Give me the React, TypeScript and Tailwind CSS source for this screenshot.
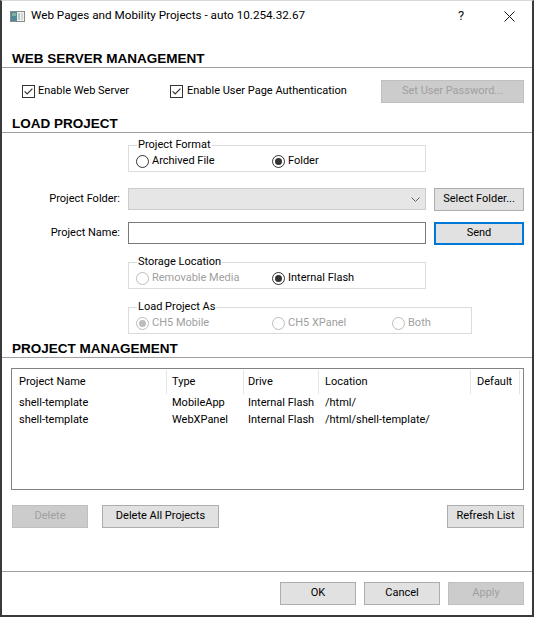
import React from "react";

type RadioProps = { checked?: boolean; disabled?: boolean };

function CheckBox() {
  return (
    <svg width="13" height="13" viewBox="0 0 13 13" className="shrink-0">
      <rect x="0.5" y="0.5" width="12" height="12" fill="#ffffff" stroke="#333333" />
      <polyline points="2.6,6.4 5.2,9 10.4,3.6" fill="none" stroke="#333333" strokeWidth="1.2" />
    </svg>
  );
}

function Radio({ checked, disabled }: RadioProps) {
  const c = disabled ? "#bcbcbc" : "#333333";
  return (
    <svg width="13" height="13" viewBox="0 0 13 13" className="shrink-0">
      <circle cx="6.5" cy="6.5" r="6" fill="#ffffff" stroke={c} />
      {checked && <circle cx="6.5" cy="6.5" r="3.5" fill={c} />}
    </svg>
  );
}

function RadioItem({ label, checked, disabled, w }: RadioProps & { label: string; w: string }) {
  return (
    <div className={`flex items-center ${w}`}>
      <Radio checked={checked} disabled={disabled} />
      <span className={`ml-[3px] ${disabled ? "text-[#a0a0a0]" : "text-black"}`}>{label}</span>
    </div>
  );
}

function Btn({
  children,
  w,
  disabled,
  primary,
  className = "",
}: {
  children: React.ReactNode;
  w: string;
  disabled?: boolean;
  primary?: boolean;
  className?: string;
}) {
  const look = disabled
    ? "bg-[#cccccc] border border-[#bfbfbf] text-[#a0a0a0]"
    : primary
      ? "bg-[#e1e1e1] border-2 border-[#0078d7] text-black"
      : "bg-[#e1e1e1] border border-[#adadad] text-black";
  return (
    <div className={`flex h-[23px] shrink-0 items-center justify-center ${w} ${look} ${className}`}>
      {children}
    </div>
  );
}

function SectionTitle({ children, mt }: { children: React.ReactNode; mt: string }) {
  return (
    <div
      className={`${mt} h-[17px] border-b border-[#a0a0a0] pl-[10px] font-['Liberation_Sans',Arial,sans-serif] text-[13.5px] font-bold leading-[16px] text-black`}
    >
      {children}
    </div>
  );
}

function Group({
  legend,
  w,
  mt,
  h,
  children,
}: {
  legend: string;
  w: string;
  mt: string;
  h: string;
  children: React.ReactNode;
}) {
  return (
    <fieldset className={`${mt} ml-[126px] ${w} border border-[#dcdcdc]`}>
      <legend className="ml-[8px] px-[1px] leading-[12px] text-black">{legend}</legend>
      <div className={`flex ${h} items-center pl-[7px]`}>{children}</div>
    </fieldset>
  );
}

const columns = [
  { name: "Project Name", w: "w-[155px]", pl: "pl-[7px]" },
  { name: "Type", w: "w-[77px]", pl: "pl-[5px]" },
  { name: "Drive", w: "w-[75px]", pl: "pl-[4px]" },
  { name: "Location", w: "w-[152px]", pl: "pl-[6px]" },
  { name: "Default", w: "w-[49px]", pl: "pl-[6px]" },
];

const projects = [
  ["shell-template", "MobileApp", "Internal Flash", "/html/", ""],
  ["shell-template", "WebXPanel", "Internal Flash", "/html/shell-template/", ""],
];

export default function App() {
  return (
    <div className="min-h-[631px] w-[549px] bg-white font-['Roboto','Liberation_Sans',Arial,sans-serif] text-[11px] text-black">
      <div className="flex h-[617px] w-[534px] flex-col border-x-2 border-b-2 border-t border-x-[#3a3a3a] border-b-[#3a3a3a] border-t-[#d8d8d8] bg-white">
        {/* title bar */}
        <div className="flex h-[30px] shrink-0 items-center">
          <svg width="15" height="11" viewBox="0 0 15 11" className="ml-[8px] shrink-0">
            <rect x="0.5" y="0.5" width="14" height="10" fill="#f2f2f2" stroke="#8a8a8a" />
            <rect x="1" y="1" width="6" height="9" fill="#4f8a97" />
            <rect x="2" y="2" width="4" height="3" fill="#7fb2a0" />
            <rect x="8" y="2" width="2" height="7" fill="#b9c9c0" />
            <rect x="11" y="2" width="2" height="7" fill="#d0d8d4" />
          </svg>
          <span className="ml-[6px] text-[11.7px]">Web Pages and Mobility Projects - auto 10.254.32.67</span>
          <div className="ml-auto flex items-center pr-[8px]">
            <span className="flex w-[30px] justify-center text-[13px] text-[#111]">?</span>
            <div className="ml-[18px] flex w-[30px] justify-center">
              <svg width="11" height="11" viewBox="0 0 11 11">
                <path d="M0.5 0.5 L10.5 10.5 M10.5 0.5 L0.5 10.5" stroke="#111" strokeWidth="1" />
              </svg>
            </div>
          </div>
        </div>

        <SectionTitle mt="mt-[20px]">WEB SERVER MANAGEMENT</SectionTitle>

        <div className="mt-[12px] flex h-[23px] items-center pr-[8px]">
          <div className="ml-[20px] flex w-[148px] items-center">
            <CheckBox />
            <span className="ml-[3px]">Enable Web Server</span>
          </div>
          <div className="flex items-center">
            <CheckBox />
            <span className="ml-[4px]">Enable User Page Authentication</span>
          </div>
          <Btn w="w-[143px]" disabled className="ml-auto">
            Set User Password...
          </Btn>
        </div>

        <SectionTitle mt="mt-[13px]">LOAD PROJECT</SectionTitle>

        <Group legend="Project Format" w="w-[298px]" mt="mt-[6px]" h="h-[20px]">
          <RadioItem label="Archived File" w="w-[136px]" />
          <RadioItem label="Folder" checked w="w-[120px]" />
        </Group>

        <div className="mt-[16px] flex h-[22px] items-center">
          <div className="w-[126px] pr-[8px] text-right">Project Folder:</div>
          <div className="flex h-[22px] w-[298px] items-center justify-end border border-[#cccccc] bg-[#e6e6e6] pr-[5px]">
            <svg width="9" height="5" viewBox="0 0 9 5">
              <path d="M0.5 0.5 L4.5 4.5 L8.5 0.5" fill="none" stroke="#606060" strokeWidth="1" />
            </svg>
          </div>
          <Btn w="w-[90px]" className="ml-[8px]">
            Select Folder...
          </Btn>
        </div>

        <div className="mt-[12px] flex h-[22px] items-center">
          <div className="w-[126px] pr-[8px] text-right">Project Name:</div>
          <div className="h-[22px] w-[298px] border border-[#7a7a7a] bg-white" />
          <Btn w="w-[90px]" primary className="ml-[8px]">
            Send
          </Btn>
        </div>

        <Group legend="Storage Location" w="w-[298px]" mt="mt-[12px]" h="h-[20px]">
          <RadioItem label="Removable Media" disabled w="w-[136px]" />
          <RadioItem label="Internal Flash" checked w="w-[120px]" />
        </Group>

        <Group legend="Load Project As" w="w-[344px]" mt="mt-[12px]" h="h-[20px]">
          <RadioItem label="CH5 Mobile" checked disabled w="w-[136px]" />
          <RadioItem label="CH5 XPanel" disabled w="w-[120px]" />
          <RadioItem label="Both" disabled w="w-[60px]" />
        </Group>

        <SectionTitle mt="mt-[7px]">PROJECT MANAGEMENT</SectionTitle>

        <div className="ml-[9px] mt-[10px] h-[122px] w-[513px] shrink-0 border border-[#828282] bg-white">
          <div className="flex h-[26px] items-stretch pb-[1px] pt-[1px]">
            {columns.map((c) => (
              <div key={c.name} className={`flex items-center border-r border-[#e5e5e5] ${c.w} ${c.pl}`}>
                {c.name}
              </div>
            ))}
          </div>
          {projects.map((row, i) => (
            <div key={i} className="flex h-[17px] items-center">
              {row.map((cell, j) => (
                <div key={j} className={`${columns[j].w} ${columns[j].pl} whitespace-nowrap`}>
                  {cell}
                </div>
              ))}
            </div>
          ))}
        </div>

        <div className="mt-[15px] flex items-center pr-[8px]">
          <Btn w="w-[76px]" disabled className="ml-[10px]">
            Delete
          </Btn>
          <Btn w="w-[117px]" className="ml-[14px]">
            Delete All Projects
          </Btn>
          <Btn w="w-[77px]" className="ml-auto">
            Refresh List
          </Btn>
        </div>

        <div className="mt-[43px] border-t border-[#a0a0a0]" />

        <div className="mt-[10px] flex justify-end gap-[8px] pr-[8px]">
          <Btn w="w-[76px]">OK</Btn>
          <Btn w="w-[76px]">Cancel</Btn>
          <Btn w="w-[76px]" disabled>
            Apply
          </Btn>
        </div>
      </div>
    </div>
  );
}
